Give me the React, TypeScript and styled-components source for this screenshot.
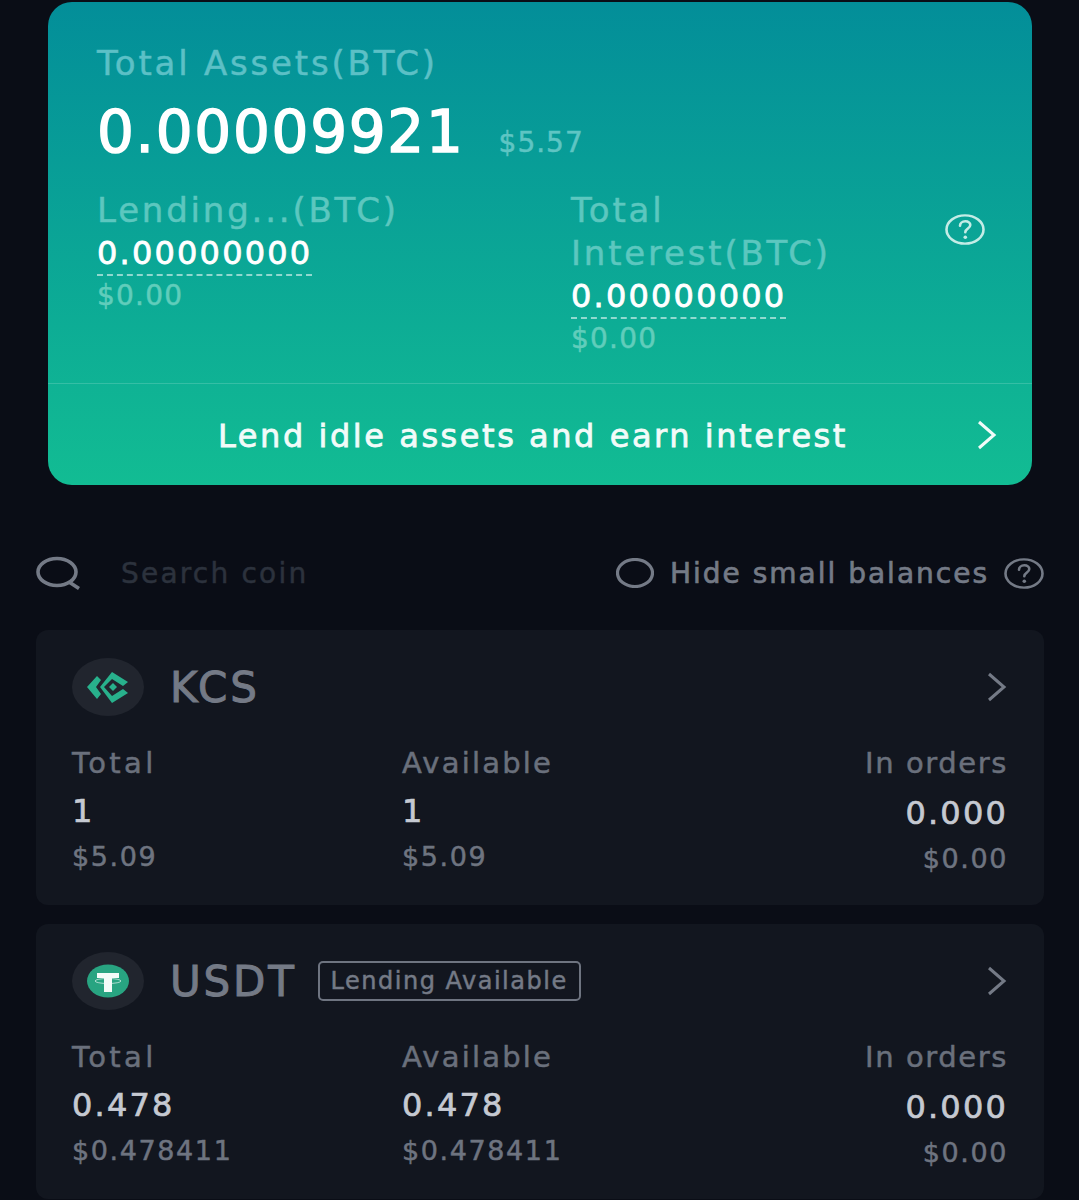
import React from 'react';
import styled, { createGlobalStyle } from 'styled-components';

const GlobalStyle = createGlobalStyle`
  html, body {
    margin: 0;
    padding: 0;
    background: #0a0d16;
    font-family: "DejaVu Sans", "Noto Sans", sans-serif;
  }
`;

const Page = styled.div`
  width: 1079px;
  height: 1200px;
  overflow: hidden;
  box-sizing: border-box;
  padding-top: 2px;
  background: #0a0d16;
`;

const HeroCard = styled.section`
  margin: 0 47px 0 48px;
  height: 483px;
  border-radius: 24px;
  background: linear-gradient(180deg, #038e99 0%, #12bc93 100%);
  display: flex;
  flex-direction: column;
`;

const HeroBody = styled.div`
  height: 382px;
  box-sizing: border-box;
  padding: 40px 48px 0 49px;
  border-bottom: 1px solid rgba(255, 255, 255, 0.16);
`;

const HeroTitle = styled.div`
  font-size: 34px;
  line-height: 42px;
  letter-spacing: 2.8px;
  -webkit-text-stroke: 0.5px #5cc0c6;
  color: #5cc0c6;
`;

const TotalRow = styled.div`
  display: flex;
  align-items: baseline;
  gap: 34px;
  margin-top: 12px;
  height: 72px;
`;

const TotalValue = styled.div`
  font-size: 58px;
  line-height: 72px;
  letter-spacing: 1.7px;
  -webkit-text-stroke: 1.5px #fff;
  color: #fff;
`;

const TotalFiat = styled.div`
  font-size: 28px;
  letter-spacing: 1px;
  -webkit-text-stroke: 0.5px #5ec5c3;
  color: #5ec5c3;
`;

const StatRow = styled.div`
  display: flex;
  align-items: flex-start;
  margin-top: 21px;
`;

const Stat = styled.div<{ $width: number }>`
  width: ${p => p.$width}px;
`;

const StatLabel = styled.div`
  font-size: 34px;
  line-height: 43px;
  letter-spacing: 2.8px;
  -webkit-text-stroke: 0.5px #5cc7bf;
  color: #5cc7bf;
`;

const StatValue = styled.div`
  display: inline-block;
  margin-top: 1px;
  font-size: 32px;
  line-height: 41px;
  letter-spacing: 2.2px;
  -webkit-text-stroke: 0.8px #fff;
  color: #fff;
  border-bottom: 2px dashed rgba(255, 255, 255, 0.55);
`;

const StatFiat = styled.div`
  font-size: 28px;
  line-height: 40px;
  letter-spacing: 1.2px;
  -webkit-text-stroke: 0.5px #60cdbb;
  color: #60cdbb;
`;

const HelpSlot = styled.div`
  margin-left: auto;
  margin-right: -1px;
  margin-top: 25px;
  display: flex;
`;

const HeroFooter = styled.div`
  flex: 1;
  position: relative;
  display: flex;
  align-items: center;
  justify-content: center;
  padding: 3px 14px 0 0;
  font-size: 32px;
  letter-spacing: 2.55px;
  -webkit-text-stroke: 0.8px #f2fbf9;
  color: #f2fbf9;
`;

const FooterChevron = styled.div`
  position: absolute;
  right: 34px;
  top: 36px;
  display: flex;
`;

const FilterRow = styled.div`
  height: 145px;
  box-sizing: border-box;
  padding: 31px 35px 0 36px;
  display: flex;
  align-items: center;
`;

const SearchPlaceholder = styled.div`
  margin-left: 39px;
  font-size: 28px;
  letter-spacing: 2.2px;
  -webkit-text-stroke: 0.5px #2c323d;
  color: #2c323d;
`;

const HideToggle = styled.div`
  margin-left: auto;
  display: flex;
  align-items: center;
`;

const ToggleLabel = styled.span`
  margin: 0 15px 0 16px;
  font-size: 28px;
  letter-spacing: 2px;
  -webkit-text-stroke: 0.7px #747a86;
  color: #747a86;
`;

const CoinList = styled.div`
  display: flex;
  flex-direction: column;
  gap: 19px;
  margin: 0 35px 0 36px;
`;

const CoinCard = styled.article`
  height: 275px;
  box-sizing: border-box;
  padding: 28px 36px 0 36px;
  border-radius: 12px;
  background: #12161f;
`;

const CoinHeader = styled.div`
  display: flex;
  align-items: center;
  height: 58px;
`;

const CoinBadge = styled.div`
  width: 72px;
  height: 58px;
  border-radius: 50%;
  background: #21252e;
  display: flex;
  align-items: center;
  justify-content: center;
`;

const CoinName = styled.div`
  margin-left: 26px;
  font-size: 42px;
  letter-spacing: 2.8px;
  -webkit-text-stroke: 1px #747a86;
  color: #747a86;
`;

const LendingTag = styled.div`
  margin-left: 21px;
  height: 40px;
  box-sizing: border-box;
  padding: 0 11px;
  display: flex;
  align-items: center;
  border: 2px solid #6e7480;
  border-radius: 5px;
  font-size: 24px;
  letter-spacing: 1.5px;
  -webkit-text-stroke: 0.5px #747a86;
  color: #747a86;
`;

const RowChevron = styled.div`
  margin-left: auto;
  display: flex;
`;

const Columns = styled.div`
  display: grid;
  grid-template-columns: 330px 1fr 1fr;
  margin-top: 27px;
`;

const Column = styled.div<{ $right?: boolean }>`
  display: flex;
  flex-direction: column;
  align-items: ${p => (p.$right ? 'flex-end' : 'flex-start')};
`;

const ColLabel = styled.div<{ $spacing?: number }>`
  font-size: 29px;
  line-height: 40px;
  letter-spacing: ${p => p.$spacing ?? 2.2}px;
  -webkit-text-stroke: 0.5px #6a707c;
  color: #6a707c;
`;

const ColValue = styled.div<{ $right?: boolean }>`
  font-size: 32px;
  line-height: 42px;
  margin-top: ${p => (p.$right ? 9 : 7)}px;
  letter-spacing: 2.2px;
  -webkit-text-stroke: 0.7px #c5c9d1;
  color: #c5c9d1;
`;

const ColFiat = styled.div`
  font-size: 27px;
  line-height: 40px;
  margin-top: 5px;
  letter-spacing: 1.6px;
  -webkit-text-stroke: 0.5px #6e7480;
  color: #6e7480;
`;

const Help = ({ color }: { color: string }) => (
  <svg width="40" height="31" viewBox="0 0 40 34" fill="none" preserveAspectRatio="none">
    <ellipse cx="20" cy="17" rx="18.5" ry="15.5" stroke={color} strokeWidth="2.6" />
    <path
      d="M15 13c0-3 2.300-5 5.300-5s5 1.800 5 4.200c0 3.800-5 3.600-5 7.800"
      stroke={color}
      strokeWidth="2.600"
      strokeLinecap="round"
    />
    <circle cx="20.300" cy="25.500" r="1.800" fill={color} />
  </svg>
);

const Chevron = ({ color }: { color: string }) => (
  <svg width="22" height="30" viewBox="0 0 22 30" fill="none">
    <path d="M3 2l15 13L3 28" stroke={color} strokeWidth="3" strokeLinejoin="miter" />
  </svg>
);

const SearchIcon = () => (
  <svg width="46" height="34" viewBox="0 0 46 34" fill="none">
    <ellipse cx="21" cy="16" rx="19" ry="13.500" stroke="#747a86" strokeWidth="3.600" />
    <path d="M33 26l10 6.500" stroke="#747a86" strokeWidth="3.600" />
  </svg>
);

const ToggleCircle = () => (
  <svg width="38" height="30" viewBox="0 0 38 30" fill="none">
    <ellipse cx="19" cy="15" rx="17.500" ry="13.500" stroke="#747a86" strokeWidth="3.200" />
  </svg>
);

const KcsLogo = () => (
  <svg width="42" height="33" viewBox="0 0 42 33" fill="#28b18c">
    <path d="M0 16L10 5l4 4-5 7 5 7-4 5z" />
    <path d="M13 16L25 1l16 10-5 4-11-7-8 8 8 9 11-7 5 4-16 10z" />
    <path d="M26 12l4 4-4 4-4-4z" />
  </svg>
);

const UsdtLogo = () => (
  <svg width="44" height="34" viewBox="0 0 44 34">
    <ellipse cx="22" cy="17" rx="21" ry="16.500" fill="#28a481" />
    <path d="M11 9h22v5h-7v14h-8V14h-7z" fill="#f3fbf8" />
    <ellipse cx="22" cy="17" rx="13" ry="2.500" fill="none" stroke="#f3fbf8" strokeWidth="0.800" opacity="0.8" />
  </svg>
);

type Coin = {
  name: string;
  logo: React.ReactNode;
  lending?: boolean;
  total: string;
  totalFiat: string;
};

const coins: Coin[] = [
  { name: 'KCS', logo: <KcsLogo />, total: '1', totalFiat: '$5.09' },
  { name: 'USDT', logo: <UsdtLogo />, lending: true, total: '0.478', totalFiat: '$0.478411' },
];

export default function App() {
  return (
    <Page>
      <GlobalStyle />
      <HeroCard>
        <HeroBody>
          <HeroTitle>Total Assets(BTC)</HeroTitle>
          <TotalRow>
            <TotalValue>0.00009921</TotalValue>
            <TotalFiat>$5.57</TotalFiat>
          </TotalRow>
          <StatRow>
            <Stat $width={474}>
              <StatLabel>Lending...(BTC)</StatLabel>
              <StatValue>0.00000000</StatValue>
              <StatFiat>$0.00</StatFiat>
            </Stat>
            <Stat $width={300}>
              <StatLabel>Total Interest(BTC)</StatLabel>
              <StatValue>0.00000000</StatValue>
              <StatFiat>$0.00</StatFiat>
            </Stat>
            <HelpSlot>
              <Help color="#c4ece6" />
            </HelpSlot>
          </StatRow>
        </HeroBody>
        <HeroFooter>
          Lend idle assets and earn interest
          <FooterChevron>
            <Chevron color="#f2fbf9" />
          </FooterChevron>
        </HeroFooter>
      </HeroCard>

      <FilterRow>
        <SearchIcon />
        <SearchPlaceholder>Search coin</SearchPlaceholder>
        <HideToggle>
          <ToggleCircle />
          <ToggleLabel>Hide small balances</ToggleLabel>
          <Help color="#747a86" />
        </HideToggle>
      </FilterRow>

      <CoinList>
        {coins.map(coin => (
          <CoinCard key={coin.name}>
            <CoinHeader>
              <CoinBadge>{coin.logo}</CoinBadge>
              <CoinName>{coin.name}</CoinName>
              {coin.lending && <LendingTag>Lending Available</LendingTag>}
              <RowChevron>
                <Chevron color="#747a86" />
              </RowChevron>
            </CoinHeader>
            <Columns>
              <Column>
                <ColLabel $spacing={3.4}>Total</ColLabel>
                <ColValue>{coin.total}</ColValue>
                <ColFiat>{coin.totalFiat}</ColFiat>
              </Column>
              <Column>
                <ColLabel>Available</ColLabel>
                <ColValue>{coin.total}</ColValue>
                <ColFiat>{coin.totalFiat}</ColFiat>
              </Column>
              <Column $right>
                <ColLabel $spacing={1.6}>In orders</ColLabel>
                <ColValue $right>0.000</ColValue>
                <ColFiat>$0.00</ColFiat>
              </Column>
            </Columns>
          </CoinCard>
        ))}
      </CoinList>
    </Page>
  );
}
